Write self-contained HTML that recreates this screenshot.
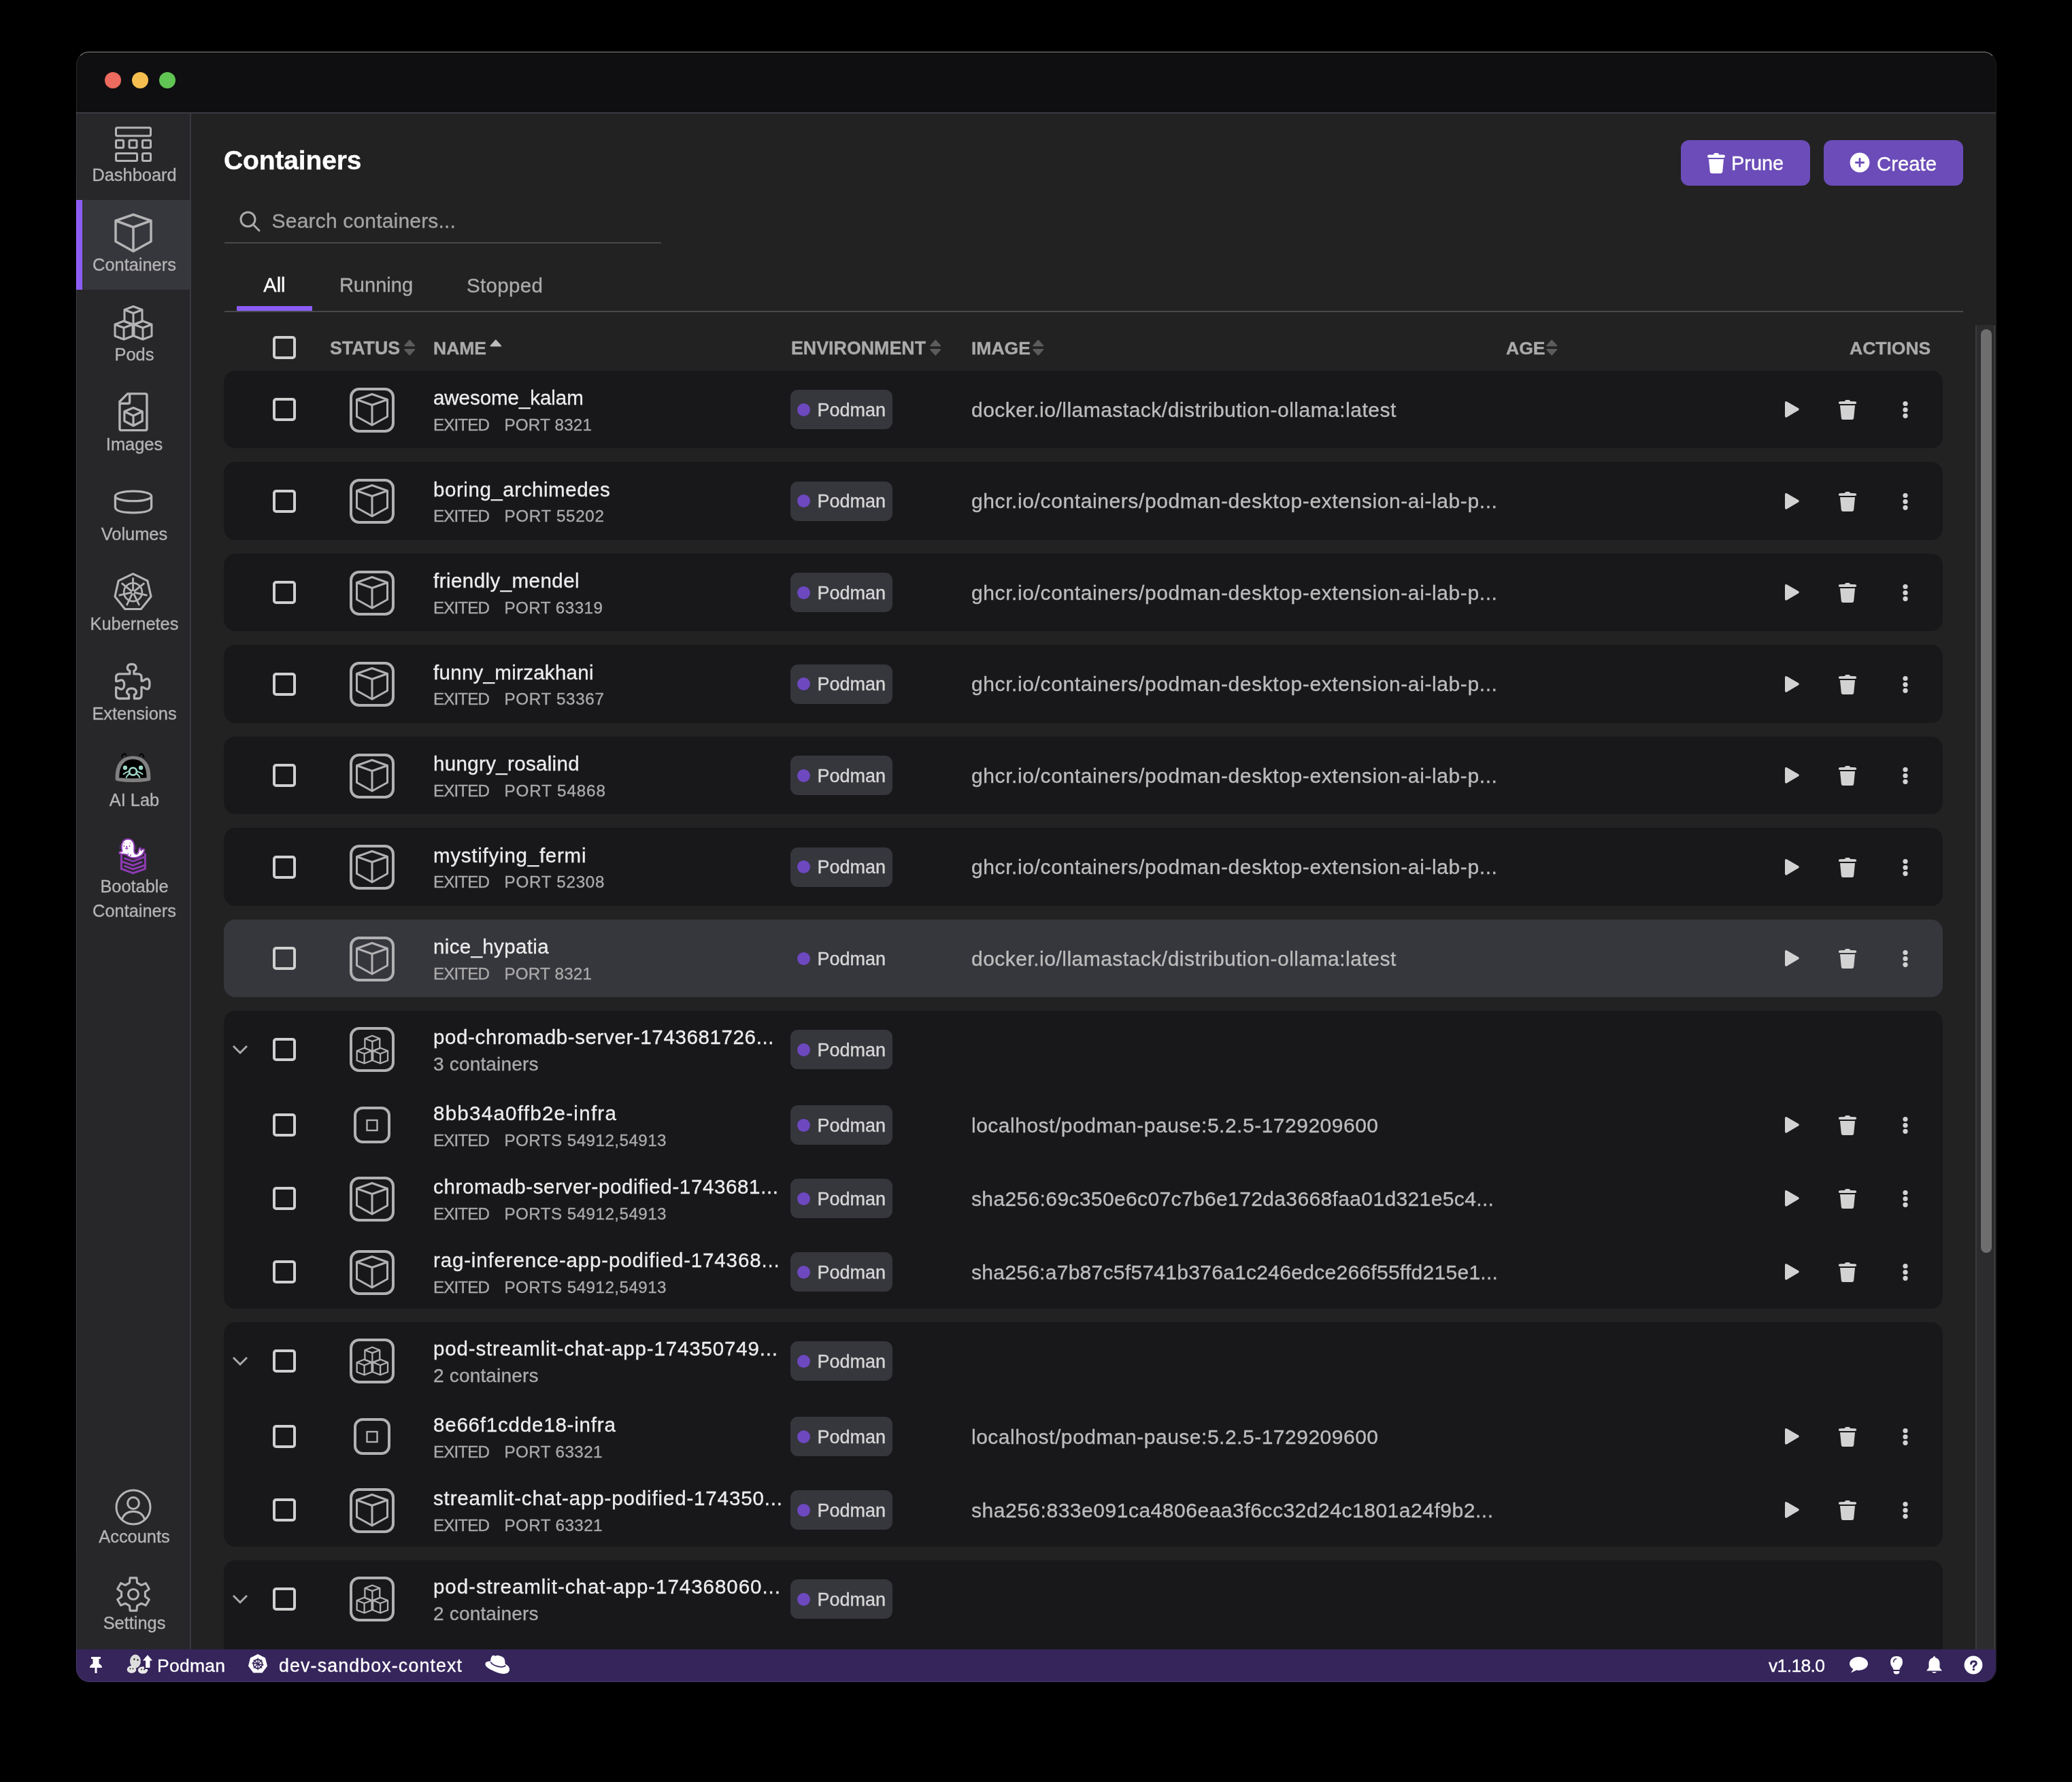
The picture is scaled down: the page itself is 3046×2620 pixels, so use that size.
<!DOCTYPE html><html><head><meta charset="utf-8"><style>
*{margin:0;padding:0;box-sizing:border-box}
html,body{width:3046px;height:2620px;background:#000;overflow:hidden}
body{position:relative;font-family:"Liberation Sans",sans-serif}
.t{position:absolute;line-height:1;white-space:nowrap;-webkit-font-smoothing:antialiased;-webkit-text-stroke:0.35px currentColor}
.a{position:absolute;display:block}
.win{position:absolute;left:112px;top:76px;width:2822px;height:2396px;border-radius:20px;overflow:hidden;background:#222222}
.cb{position:absolute;width:34px;height:34px;border:4px solid #cfcfcf;border-radius:5px}
.card{position:absolute;left:329px;width:2527px;border-radius:17px}
.badge{position:absolute;left:1162px;width:150px;height:58px;border-radius:11px}
.dot{position:absolute;left:10px;top:19.5px;width:19px;height:19px;border-radius:50%;background:#6d48bf}
</style></head><body><div id="root" style="position:absolute;left:0;top:0;width:3046px;height:2620px;will-change:transform">

<div class="win"></div>
<div class="a" style="left:112px;top:76px;width:2822px;height:90px;background:#0f0f11;border-radius:20px 20px 0 0"></div>
<div class="a" style="left:112px;top:165px;width:2822px;height:2px;background:#393940"></div>
<div class="a" style="left:154px;top:106px;width:24px;height:24px;border-radius:50%;background:#ec6a5e"></div>
<div class="a" style="left:194px;top:106px;width:24px;height:24px;border-radius:50%;background:#f4bf4f"></div>
<div class="a" style="left:234px;top:106px;width:24px;height:24px;border-radius:50%;background:#61c554"></div>
<div class="a" style="left:112px;top:167px;width:167px;height:2258px;background:#27272a"></div>
<div class="a" style="left:279px;top:167px;width:2px;height:2258px;background:#393940"></div>
<div class="a" style="left:112px;top:294px;width:167px;height:132px;background:#36363d"></div>
<div class="a" style="left:112px;top:294px;width:9px;height:132px;background:#8b5cf6"></div>
<svg class="a" style="left:166px;top:183px" width="60" height="60" viewBox="0 0 60 60" fill="none" stroke="#b4b4b5" stroke-width="3"><rect x="4.5" y="4.8" width="51" height="12" rx="2"/><rect x="4.5" y="23.3" width="11" height="11" rx="1.5"/><rect x="24" y="23.3" width="11" height="11" rx="1.5"/><rect x="43.5" y="23.3" width="12" height="11" rx="1.5"/><rect x="4.5" y="42.5" width="31" height="11" rx="1.5"/><rect x="43.5" y="42.5" width="12" height="11" rx="1.5"/></svg>
<div class="t" style="left:47.5px;width:300px;text-align:center;top:244.50px;font-size:25.4px;color:#b4b4b5">Dashboard</div>
<svg class="a" style="left:165px;top:312px" width="62" height="62" viewBox="0 0 62 62" fill="none" stroke="#b4b4b5" stroke-width="3.5" stroke-linejoin="round"><path d="M31 3.5 L57 12.5 L57 43 L31 57.5 L5 43 L5 12.5 Z"/><path d="M5 12.5 L31 22 L57 12.5 M31 22 L31 57.5"/></svg>
<div class="t" style="left:47.5px;width:300px;text-align:center;top:376.50px;font-size:25.4px;color:#b4b4b5">Containers</div>
<svg class="a" style="left:165px;top:447px" width="62" height="56" viewBox="0 0 62 56" fill="none" stroke="#b4b4b5" stroke-width="3" stroke-linejoin="round"><path d="M31 3.5 L44 8.5 L44 25.5 L31 30.5 L18 25.5 L18 8.5 Z"/><path d="M18 8.5 L31 13.5 L44 8.5 M31 13.5 L31 30.5"/><path d="M17 25 L30 30 L30 47 L17 52 L4 47 L4 30 Z"/><path d="M4 30 L17 35 L30 30 M17 35 L17 52"/><path d="M45 25 L58 30 L58 47 L45 52 L32 47 L32 30 Z"/><path d="M32 30 L45 35 L58 30 M45 35 L45 52"/></svg>
<div class="t" style="left:47.5px;width:300px;text-align:center;top:508.50px;font-size:25.4px;color:#b4b4b5">Pods</div>
<svg class="a" style="left:172px;top:575px" width="48" height="62" viewBox="0 0 48 62" fill="none" stroke="#b4b4b5" stroke-width="3.4" stroke-linejoin="round"><path d="M15.5 3.85 L41.5 3.85 Q43.95 3.85 43.95 6.3 L43.95 55.2 Q43.95 57.65 41.5 57.65 L6.4 57.65 Q3.95 57.65 3.95 55.2 L3.95 15.5 Z"/><path d="M18.6 3.85 L18.6 16 Q18.6 18.2 16.4 18.2 L3.95 18.2"/><path d="M24 24.6 L37.2 30 L37.2 44 L24 51 L10.9 44 L10.9 30 Z M10.9 30 L24 36.3 L37.2 30 M24 36.3 L24 51" stroke-width="3.2"/></svg>
<div class="t" style="left:47.5px;width:300px;text-align:center;top:640.50px;font-size:25.4px;color:#b4b4b5">Images</div>
<svg class="a" style="left:165px;top:718px" width="62" height="40" viewBox="0 0 62 40" fill="none" stroke="#b4b4b5" stroke-width="3.3"><ellipse cx="31" cy="11.4" rx="26.6" ry="7.3"/><path d="M4.4 11.4 L4.4 27.5 Q4.4 35.6 31 35.8 Q57.6 35.6 57.6 27.5 L57.6 11.4"/></svg>
<div class="t" style="left:47.5px;width:300px;text-align:center;top:772.50px;font-size:25.4px;color:#b4b4b5">Volumes</div>
<svg class="a" style="left:160px;top:835px" width="72" height="70" viewBox="0 0 72 70" fill="none" stroke="#b4b4b5" stroke-linejoin="round" stroke-linecap="round"><path d="M35.50 8.70 L56.80 18.96 L62.07 42.01 L47.32 60.50 L23.68 60.50 L8.93 42.01 L14.20 18.96 Z" stroke-width="3.1"/><circle cx="35.5" cy="35.7" r="13.4" stroke-width="2.6"/><path d="M35.5 35.7 L35.50 15.40 M35.5 35.7 L51.37 23.04 M35.5 35.7 L55.29 40.22 M35.5 35.7 L44.31 53.99 M35.5 35.7 L26.69 53.99 M35.5 35.7 L15.71 40.22 M35.5 35.7 L19.63 23.04" stroke-width="2.8"/><circle cx="35.5" cy="35.7" r="4.6" fill="{NAVC}" stroke="none"/><circle cx="35.5" cy="35.7" r="1.9" fill="#27272a" stroke="none"/></svg>
<div class="t" style="left:47.5px;width:300px;text-align:center;top:904.50px;font-size:25.4px;color:#b4b4b5">Kubernetes</div>
<svg class="a" style="left:163px;top:968px" width="66" height="66" viewBox="0 0 66 66" fill="none" stroke="#b4b4b5" stroke-width="3.3" stroke-linejoin="round"><path d="M12.6 22.8 L27.8 22.8 L27.8 18.6 C23 16.5 22.6 8.6 30.7 8.3 C38.6 8.6 38.4 16.5 33.9 18.6 L33.9 22.8 L40 22.8 Q45 22.8 45 27.8 L45 33.2 C48.5 33.8 50 29.8 53.3 30 C58.2 30.3 58.2 45 53.3 45.2 C50 45.2 48.6 42 45 42.2 L45 54 Q45 59 40 59 L34.4 59 L34.4 53.6 C39.5 51.5 37.8 44.2 30.4 44.2 C23 44.2 21.4 51.5 26.5 53.4 L26.5 59 L12.6 59 Q7.6 59 7.6 54 L7.6 42.8 C10.5 41.8 13 45.8 15.6 45.4 C21 44.8 21 32.2 15.6 31.8 C13 31.6 10.5 34.4 7.6 33.4 L7.6 27.8 Q7.6 22.8 12.6 22.8 Z"/></svg>
<div class="t" style="left:47.5px;width:300px;text-align:center;top:1036.50px;font-size:25.4px;color:#b4b4b5">Extensions</div>
<svg class="a" style="left:163px;top:1100px" width="66" height="56" viewBox="0 0 66 56"><path d="M16.2 13 Q17 8.6 19.1 8.6 Q21 8.4 22.3 10.2 M42.4 10.2 Q43.6 8.4 45.2 8.6 Q47.6 8.8 48.4 13" stroke="#000" stroke-width="2" fill="none" stroke-linecap="round"/><path d="M6.5 45 Q6 12 32.5 11.5 Q59 12 58.4 45 Q58.4 48 54 48.5 Q32.5 51.5 11 48.5 Q6.5 48 6.5 45 Z" fill="#808080"/><path d="M12.1 43.5 Q12.5 16.5 32.5 16.2 Q52.5 16.5 52.6 43.5 Q32.5 45.5 12.1 43.5 Z" fill="#000"/><circle cx="20.9" cy="28.8" r="3.2" fill="#9dd3c5"/><circle cx="44.1" cy="28.8" r="3.2" fill="#9dd3c5"/><circle cx="32.5" cy="34.2" r="5.4" fill="none" stroke="#9dd3c5" stroke-width="2.8"/><path d="M18.5 38.2 Q22 35 26.6 34.3 M22.6 43.3 Q24 39 27.8 37.5 M46.5 38.2 Q43 35 38.4 34.3 M42.4 43.3 Q41 39 37.2 37.5" stroke="#9dd3c5" stroke-width="1.9" fill="none" stroke-linecap="round"/></svg>
<div class="t" style="left:47.5px;width:300px;text-align:center;top:1163.50px;font-size:25.4px;color:#b4b4b5">AI Lab</div>
<svg class="a" style="left:166px;top:1226px" width="58" height="66" viewBox="0 0 58 66"><path d="M12.4 30.5 L12.4 51.5 L29.6 57.6 L47.4 51.5 L47.4 28.5" fill="none" stroke="#8e3bb3" stroke-width="3" stroke-linejoin="miter"/><path d="M16.3 35.6 L29.6 40.3 L47.4 33.6 M12.4 40.4 L29.6 46.4 L43 41.1 M16.3 47 L29.6 51.9 L47.4 46" fill="none" stroke="#8e3bb3" stroke-width="2.9"/><path d="M13.5 25.5 C11.5 17 13 8 21.9 7.6 C30.5 7.8 31.8 15 31.3 22.5 C31 26 31.5 29 33.8 29.6 C36.5 30 37.4 27.5 37.8 25 C38.2 22.5 39 20.2 40.2 20.5 C41.4 21 40.8 23.5 41.5 24.2 C42.5 23.5 44.3 21.4 45.8 22.5 C47.2 23.6 45 28 43 30.5 C40 33.5 34 35.8 29.6 35.2 C25 35 22 33 20.5 31 C17.5 29.5 13 30 10.5 29.2 C8.6 28.6 9 26.5 11 26.2 Z" fill="#fff" stroke="#8e3bb3" stroke-width="2"/><g fill="#8e3bb3"><circle cx="16.3" cy="18.1" r="1"/><circle cx="24.4" cy="18.1" r="1"/><circle cx="20.2" cy="19.2" r="1.2"/><circle cx="16.3" cy="13.4" r="0.7"/><circle cx="25.5" cy="13.4" r="0.7"/></g><path d="M18.3 21 Q20.2 23 22.2 21 M22.8 28.6 L21.2 31.6 M26.6 30.4 L25 33" fill="none" stroke="#8e3bb3" stroke-width="1.3"/><path d="M9 17.6 L11.8 17.6 M9 19.6 L11.8 19.6 M9 21.6 L11.8 21.6 M32.2 17.6 L34.6 17.6 M32.2 19.6 L34.6 19.6 M32.2 21.6 L34.6 21.6" stroke="#8e3bb3" stroke-width="0.7" opacity="0.7"/></svg>
<div class="t" style="left:47.5px;width:300px;text-align:center;top:1290.50px;font-size:25.4px;color:#b4b4b5">Bootable</div>
<div class="t" style="left:47.5px;width:300px;text-align:center;top:1326.50px;font-size:25.4px;color:#b4b4b5">Containers</div>
<svg class="a" style="left:165.5px;top:2185.5px" width="60" height="60" viewBox="0 0 60 60" fill="none" stroke="#b4b4b5" stroke-width="3"><circle cx="30" cy="30" r="25"/><circle cx="30" cy="24" r="8.4"/><path d="M13.5 47.5 Q17.5 36.2 30 36.2 Q42.5 36.2 46.5 47.5"/></svg>
<div class="t" style="left:47.5px;width:300px;text-align:center;top:2246.90px;font-size:25.4px;color:#b4b4b5">Accounts</div>
<svg class="a" style="left:165.5px;top:2313.5px" width="60" height="60" viewBox="0 0 60 60" fill="none" stroke="#b4b4b5" stroke-width="3.1" stroke-linejoin="round"><path d="M24.40 13.10 L25.11 5.89 L34.89 5.89 L35.60 13.10 L41.83 16.70 L48.44 13.71 L53.32 22.18 L47.43 26.40 L47.43 33.60 L53.32 37.82 L48.44 46.29 L41.83 43.30 L35.60 46.90 L34.89 54.11 L25.11 54.11 L24.40 46.90 L18.17 43.30 L11.56 46.29 L6.68 37.82 L12.57 33.60 L12.57 26.40 L6.68 22.18 L11.56 13.71 L18.17 16.70 Z"/><circle cx="30" cy="30" r="7.5"/></svg>
<div class="t" style="left:47.5px;width:300px;text-align:center;top:2374.10px;font-size:25.4px;color:#b4b4b5">Settings</div>
<div class="t" style="left:329.00px;top:216.29px;font-size:39px;color:#ffffff;font-weight:700;letter-spacing:-0.139px;">Containers</div>
<svg class="a" style="left:350px;top:308px" width="36" height="36" viewBox="0 0 36 36" fill="none" stroke="#aaaaaa" stroke-width="3" stroke-linecap="round"><circle cx="14.5" cy="14.5" r="10.5"/><path d="M22.5 22.5 L31 31"/></svg>
<div class="t" style="left:399.60px;top:310.00px;font-size:30px;color:#a3a3a3;letter-spacing:0.186px;">Search containers...</div>
<div class="a" style="left:330px;top:355.5px;width:642px;height:2px;background:#48484d"></div>
<div class="t" style="left:387.30px;top:405.05px;font-size:29px;color:#ffffff;">All</div>
<div class="t" style="left:498.90px;top:405.05px;font-size:29px;color:#aaaaaa;letter-spacing:0.017px;">Running</div>
<div class="t" style="left:686.00px;top:404.63px;font-size:29.5px;color:#aaaaaa;letter-spacing:0.354px;">Stopped</div>
<div class="a" style="left:330px;top:457px;width:2556px;height:2px;background:#48484d"></div>
<div class="a" style="left:348px;top:450px;width:111px;height:7px;background:#8b5cf6"></div>
<div class="a" style="left:2471px;top:206px;width:190px;height:67px;border-radius:12px;background:#6b4cb8"></div>
<div class="a" style="left:2681px;top:206px;width:205px;height:67px;border-radius:12px;background:#6b4cb8"></div>
<svg class="a" style="left:2508.5px;top:223.5px" width="28" height="32" viewBox="0 0 28 32" fill="#ffffff"><path d="M10 3.5 Q10 1 12.5 1 L15.5 1 Q18 1 18 3.5 L24.5 3.5 Q27 3.5 27 6 Q27 8 24.5 8 L3.5 8 Q1 8 1 6 Q1 3.5 3.5 3.5 Z"/><path d="M3 10 L25 10 L23.3 28 Q23 31 20 31 L8 31 Q5 31 4.7 28 Z"/></svg>
<div class="t" style="left:2545.00px;top:226.04px;font-size:28.9px;color:#ffffff;">Prune</div>
<svg class="a" style="left:2718.5px;top:224px" width="30" height="30" viewBox="0 0 30 30"><circle cx="15" cy="15" r="14.4" fill="#fff"/><path d="M15 9.3 L15 20.7 M9.3 15 L20.7 15" stroke="#6b4cb8" stroke-width="2.8" stroke-linecap="round"/></svg>
<div class="t" style="left:2759.00px;top:225.70px;font-size:29.3px;color:#ffffff;">Create</div>
<div class="cb" style="left:401px;top:494px;border-color:#cfcfcf"></div>
<div class="t" style="left:485.00px;top:498.81px;font-size:26.8px;color:#aaaaaa;font-weight:700;">STATUS</div>
<svg class="a" style="left:594px;top:498px" width="17" height="26" viewBox="0 0 17 26" fill="#5c5c5c" stroke="#5c5c5c" stroke-width="2" stroke-linejoin="round"><path d="M8.2 2.6 L15.2 10.3 L1.2 10.3 Z"/><path d="M8.2 23.6 L15.2 15.9 L1.2 15.9 Z"/></svg>
<div class="t" style="left:637.00px;top:499.07px;font-size:26.5px;color:#aaaaaa;font-weight:700;">NAME</div>
<svg class="a" style="left:720px;top:498px" width="18" height="13" viewBox="0 0 18 13" fill="#bdbdbd" stroke="#bdbdbd" stroke-width="2" stroke-linejoin="round"><path d="M8.8 2.4 L16.2 10.6 L1.4 10.6 Z"/></svg>
<div class="t" style="left:1163.00px;top:498.81px;font-size:26.8px;color:#aaaaaa;font-weight:700;">ENVIRONMENT</div>
<svg class="a" style="left:1367px;top:498px" width="17" height="26" viewBox="0 0 17 26" fill="#5c5c5c" stroke="#5c5c5c" stroke-width="2" stroke-linejoin="round"><path d="M8.2 2.6 L15.2 10.3 L1.2 10.3 Z"/><path d="M8.2 23.6 L15.2 15.9 L1.2 15.9 Z"/></svg>
<div class="t" style="left:1428.00px;top:499.07px;font-size:26.5px;color:#aaaaaa;font-weight:700;">IMAGE</div>
<svg class="a" style="left:1518px;top:498px" width="17" height="26" viewBox="0 0 17 26" fill="#5c5c5c" stroke="#5c5c5c" stroke-width="2" stroke-linejoin="round"><path d="M8.2 2.6 L15.2 10.3 L1.2 10.3 Z"/><path d="M8.2 23.6 L15.2 15.9 L1.2 15.9 Z"/></svg>
<div class="t" style="left:2214.00px;top:499.07px;font-size:26.5px;color:#aaaaaa;font-weight:700;">AGE</div>
<svg class="a" style="left:2273px;top:498px" width="17" height="26" viewBox="0 0 17 26" fill="#5c5c5c" stroke="#5c5c5c" stroke-width="2" stroke-linejoin="round"><path d="M8.2 2.6 L15.2 10.3 L1.2 10.3 Z"/><path d="M8.2 23.6 L15.2 15.9 L1.2 15.9 Z"/></svg>
<div class="t" style="left:2719.00px;top:499.07px;font-size:26.5px;color:#aaaaaa;font-weight:700;">ACTIONS</div>
<div class="card" style="top:544.5px;height:114.5px;background:#18181b"></div><div class="cb" style="left:401px;top:585.0px;border-color:#cfcfcf"></div><svg class="a" style="left:514px;top:569.5px" width="66" height="66" viewBox="0 0 66 66" fill="none" stroke="#b1b1b3" stroke-linejoin="round"><rect x="2" y="2" width="62" height="62" rx="12" stroke-width="4"/><g stroke-width="3"><path d="M33 9.5 L55.5 17.5 L55.5 42.5 L33 55 L10.5 42.5 L10.5 17.5 Z"/><path d="M10.5 17.5 L33 25.5 L55.5 17.5 M33 25.5 L33 55"/></g></svg><div class="t" style="left:637.00px;top:570.03px;font-size:29.5px;color:#ececec;letter-spacing:-0.048px;">awesome_kalam</div><div class="t" style="left:637.00px;top:612.51px;font-size:24.2px;color:#aaaaaa;letter-spacing:-0.875px;">EXITED</div><div class="t" style="left:741.50px;top:612.51px;font-size:24.2px;color:#aaaaaa;letter-spacing:0.203px;">PORT 8321</div><div class="badge" style="top:573.0px;background:#36363d"><span class="dot"></span></div><div class="t" style="left:1201.50px;top:589.74px;font-size:27px;color:#d6d6d6;">Podman</div><div class="t" style="left:1428.00px;top:587.61px;font-size:30px;color:#bcbcbc;letter-spacing:0.485px;">docker.io/llamastack/distribution-ollama:latest</div><svg class="a" style="left:2621px;top:588.0px" width="26" height="28" viewBox="0 0 26 28"><path d="M3 4.5 Q3 1 6 2.6 L22.5 12 Q25 13.7 22.5 15.6 L6 25.2 Q3 26.8 3 23.3 Z" fill="#d2d2d2"/></svg><svg class="a" style="left:2702px;top:587.0px" width="28" height="31" viewBox="0 0 28 31"><path d="M10 3 Q10 1 12.5 1 L15.5 1 Q18 1 18 3 L25 3.2 Q27.2 3.4 27.2 5.3 Q27.2 7 25 7 L3 7 Q0.8 7 0.8 5.3 Q0.8 3.4 3 3.2 Z" fill="#d2d2d2"/><path d="M3 9 L25 9 L23.2 27.5 Q23 30 20.5 30 L7.5 30 Q5 30 4.8 27.5 Z" fill="#d2d2d2"/></svg><svg class="a" style="left:2796px;top:588.0px" width="10" height="28" viewBox="0 0 10 28" fill="#d2d2d2"><circle cx="5" cy="5.5" r="3.6"/><circle cx="5" cy="14.5" r="3.6"/><circle cx="5" cy="23.3" r="3.6"/></svg>
<div class="card" style="top:679.0px;height:114.5px;background:#18181b"></div><div class="cb" style="left:401px;top:719.5px;border-color:#cfcfcf"></div><svg class="a" style="left:514px;top:704.0px" width="66" height="66" viewBox="0 0 66 66" fill="none" stroke="#b1b1b3" stroke-linejoin="round"><rect x="2" y="2" width="62" height="62" rx="12" stroke-width="4"/><g stroke-width="3"><path d="M33 9.5 L55.5 17.5 L55.5 42.5 L33 55 L10.5 42.5 L10.5 17.5 Z"/><path d="M10.5 17.5 L33 25.5 L55.5 17.5 M33 25.5 L33 55"/></g></svg><div class="t" style="left:637.00px;top:704.53px;font-size:29.5px;color:#ececec;letter-spacing:0.558px;">boring_archimedes</div><div class="t" style="left:637.00px;top:747.01px;font-size:24.2px;color:#aaaaaa;letter-spacing:-0.875px;">EXITED</div><div class="t" style="left:741.50px;top:747.01px;font-size:24.2px;color:#aaaaaa;letter-spacing:0.681px;">PORT 55202</div><div class="badge" style="top:707.5px;background:#36363d"><span class="dot"></span></div><div class="t" style="left:1201.50px;top:724.24px;font-size:27px;color:#d6d6d6;">Podman</div><div class="t" style="left:1428.00px;top:722.11px;font-size:30px;color:#bcbcbc;letter-spacing:0.602px;">ghcr.io/containers/podman-desktop-extension-ai-lab-p...</div><svg class="a" style="left:2621px;top:722.5px" width="26" height="28" viewBox="0 0 26 28"><path d="M3 4.5 Q3 1 6 2.6 L22.5 12 Q25 13.7 22.5 15.6 L6 25.2 Q3 26.8 3 23.3 Z" fill="#d2d2d2"/></svg><svg class="a" style="left:2702px;top:721.5px" width="28" height="31" viewBox="0 0 28 31"><path d="M10 3 Q10 1 12.5 1 L15.5 1 Q18 1 18 3 L25 3.2 Q27.2 3.4 27.2 5.3 Q27.2 7 25 7 L3 7 Q0.8 7 0.8 5.3 Q0.8 3.4 3 3.2 Z" fill="#d2d2d2"/><path d="M3 9 L25 9 L23.2 27.5 Q23 30 20.5 30 L7.5 30 Q5 30 4.8 27.5 Z" fill="#d2d2d2"/></svg><svg class="a" style="left:2796px;top:722.5px" width="10" height="28" viewBox="0 0 10 28" fill="#d2d2d2"><circle cx="5" cy="5.5" r="3.6"/><circle cx="5" cy="14.5" r="3.6"/><circle cx="5" cy="23.3" r="3.6"/></svg>
<div class="card" style="top:813.5px;height:114.5px;background:#18181b"></div><div class="cb" style="left:401px;top:854.0px;border-color:#cfcfcf"></div><svg class="a" style="left:514px;top:838.5px" width="66" height="66" viewBox="0 0 66 66" fill="none" stroke="#b1b1b3" stroke-linejoin="round"><rect x="2" y="2" width="62" height="62" rx="12" stroke-width="4"/><g stroke-width="3"><path d="M33 9.5 L55.5 17.5 L55.5 42.5 L33 55 L10.5 42.5 L10.5 17.5 Z"/><path d="M10.5 17.5 L33 25.5 L55.5 17.5 M33 25.5 L33 55"/></g></svg><div class="t" style="left:637.00px;top:839.03px;font-size:29.5px;color:#ececec;letter-spacing:0.454px;">friendly_mendel</div><div class="t" style="left:637.00px;top:881.51px;font-size:24.2px;color:#aaaaaa;letter-spacing:-0.875px;">EXITED</div><div class="t" style="left:741.50px;top:881.51px;font-size:24.2px;color:#aaaaaa;letter-spacing:0.458px;">PORT 63319</div><div class="badge" style="top:842.0px;background:#36363d"><span class="dot"></span></div><div class="t" style="left:1201.50px;top:858.74px;font-size:27px;color:#d6d6d6;">Podman</div><div class="t" style="left:1428.00px;top:856.61px;font-size:30px;color:#bcbcbc;letter-spacing:0.602px;">ghcr.io/containers/podman-desktop-extension-ai-lab-p...</div><svg class="a" style="left:2621px;top:857.0px" width="26" height="28" viewBox="0 0 26 28"><path d="M3 4.5 Q3 1 6 2.6 L22.5 12 Q25 13.7 22.5 15.6 L6 25.2 Q3 26.8 3 23.3 Z" fill="#d2d2d2"/></svg><svg class="a" style="left:2702px;top:856.0px" width="28" height="31" viewBox="0 0 28 31"><path d="M10 3 Q10 1 12.5 1 L15.5 1 Q18 1 18 3 L25 3.2 Q27.2 3.4 27.2 5.3 Q27.2 7 25 7 L3 7 Q0.8 7 0.8 5.3 Q0.8 3.4 3 3.2 Z" fill="#d2d2d2"/><path d="M3 9 L25 9 L23.2 27.5 Q23 30 20.5 30 L7.5 30 Q5 30 4.8 27.5 Z" fill="#d2d2d2"/></svg><svg class="a" style="left:2796px;top:857.0px" width="10" height="28" viewBox="0 0 10 28" fill="#d2d2d2"><circle cx="5" cy="5.5" r="3.6"/><circle cx="5" cy="14.5" r="3.6"/><circle cx="5" cy="23.3" r="3.6"/></svg>
<div class="card" style="top:948.0px;height:114.5px;background:#18181b"></div><div class="cb" style="left:401px;top:988.5px;border-color:#cfcfcf"></div><svg class="a" style="left:514px;top:973.0px" width="66" height="66" viewBox="0 0 66 66" fill="none" stroke="#b1b1b3" stroke-linejoin="round"><rect x="2" y="2" width="62" height="62" rx="12" stroke-width="4"/><g stroke-width="3"><path d="M33 9.5 L55.5 17.5 L55.5 42.5 L33 55 L10.5 42.5 L10.5 17.5 Z"/><path d="M10.5 17.5 L33 25.5 L55.5 17.5 M33 25.5 L33 55"/></g></svg><div class="t" style="left:637.00px;top:973.53px;font-size:29.5px;color:#ececec;letter-spacing:0.290px;">funny_mirzakhani</div><div class="t" style="left:637.00px;top:1016.01px;font-size:24.2px;color:#aaaaaa;letter-spacing:-0.875px;">EXITED</div><div class="t" style="left:741.50px;top:1016.01px;font-size:24.2px;color:#aaaaaa;letter-spacing:0.681px;">PORT 53367</div><div class="badge" style="top:976.5px;background:#36363d"><span class="dot"></span></div><div class="t" style="left:1201.50px;top:993.24px;font-size:27px;color:#d6d6d6;">Podman</div><div class="t" style="left:1428.00px;top:991.11px;font-size:30px;color:#bcbcbc;letter-spacing:0.602px;">ghcr.io/containers/podman-desktop-extension-ai-lab-p...</div><svg class="a" style="left:2621px;top:991.5px" width="26" height="28" viewBox="0 0 26 28"><path d="M3 4.5 Q3 1 6 2.6 L22.5 12 Q25 13.7 22.5 15.6 L6 25.2 Q3 26.8 3 23.3 Z" fill="#d2d2d2"/></svg><svg class="a" style="left:2702px;top:990.5px" width="28" height="31" viewBox="0 0 28 31"><path d="M10 3 Q10 1 12.5 1 L15.5 1 Q18 1 18 3 L25 3.2 Q27.2 3.4 27.2 5.3 Q27.2 7 25 7 L3 7 Q0.8 7 0.8 5.3 Q0.8 3.4 3 3.2 Z" fill="#d2d2d2"/><path d="M3 9 L25 9 L23.2 27.5 Q23 30 20.5 30 L7.5 30 Q5 30 4.8 27.5 Z" fill="#d2d2d2"/></svg><svg class="a" style="left:2796px;top:991.5px" width="10" height="28" viewBox="0 0 10 28" fill="#d2d2d2"><circle cx="5" cy="5.5" r="3.6"/><circle cx="5" cy="14.5" r="3.6"/><circle cx="5" cy="23.3" r="3.6"/></svg>
<div class="card" style="top:1082.5px;height:114.5px;background:#18181b"></div><div class="cb" style="left:401px;top:1123.0px;border-color:#cfcfcf"></div><svg class="a" style="left:514px;top:1107.5px" width="66" height="66" viewBox="0 0 66 66" fill="none" stroke="#b1b1b3" stroke-linejoin="round"><rect x="2" y="2" width="62" height="62" rx="12" stroke-width="4"/><g stroke-width="3"><path d="M33 9.5 L55.5 17.5 L55.5 42.5 L33 55 L10.5 42.5 L10.5 17.5 Z"/><path d="M10.5 17.5 L33 25.5 L55.5 17.5 M33 25.5 L33 55"/></g></svg><div class="t" style="left:637.00px;top:1108.03px;font-size:29.5px;color:#ececec;letter-spacing:0.338px;">hungry_rosalind</div><div class="t" style="left:637.00px;top:1150.51px;font-size:24.2px;color:#aaaaaa;letter-spacing:-0.875px;">EXITED</div><div class="t" style="left:741.50px;top:1150.51px;font-size:24.2px;color:#aaaaaa;letter-spacing:0.903px;">PORT 54868</div><div class="badge" style="top:1111.0px;background:#36363d"><span class="dot"></span></div><div class="t" style="left:1201.50px;top:1127.74px;font-size:27px;color:#d6d6d6;">Podman</div><div class="t" style="left:1428.00px;top:1125.61px;font-size:30px;color:#bcbcbc;letter-spacing:0.602px;">ghcr.io/containers/podman-desktop-extension-ai-lab-p...</div><svg class="a" style="left:2621px;top:1126.0px" width="26" height="28" viewBox="0 0 26 28"><path d="M3 4.5 Q3 1 6 2.6 L22.5 12 Q25 13.7 22.5 15.6 L6 25.2 Q3 26.8 3 23.3 Z" fill="#d2d2d2"/></svg><svg class="a" style="left:2702px;top:1125.0px" width="28" height="31" viewBox="0 0 28 31"><path d="M10 3 Q10 1 12.5 1 L15.5 1 Q18 1 18 3 L25 3.2 Q27.2 3.4 27.2 5.3 Q27.2 7 25 7 L3 7 Q0.8 7 0.8 5.3 Q0.8 3.4 3 3.2 Z" fill="#d2d2d2"/><path d="M3 9 L25 9 L23.2 27.5 Q23 30 20.5 30 L7.5 30 Q5 30 4.8 27.5 Z" fill="#d2d2d2"/></svg><svg class="a" style="left:2796px;top:1126.0px" width="10" height="28" viewBox="0 0 10 28" fill="#d2d2d2"><circle cx="5" cy="5.5" r="3.6"/><circle cx="5" cy="14.5" r="3.6"/><circle cx="5" cy="23.3" r="3.6"/></svg>
<div class="card" style="top:1217.0px;height:114.5px;background:#18181b"></div><div class="cb" style="left:401px;top:1257.5px;border-color:#cfcfcf"></div><svg class="a" style="left:514px;top:1242.0px" width="66" height="66" viewBox="0 0 66 66" fill="none" stroke="#b1b1b3" stroke-linejoin="round"><rect x="2" y="2" width="62" height="62" rx="12" stroke-width="4"/><g stroke-width="3"><path d="M33 9.5 L55.5 17.5 L55.5 42.5 L33 55 L10.5 42.5 L10.5 17.5 Z"/><path d="M10.5 17.5 L33 25.5 L55.5 17.5 M33 25.5 L33 55"/></g></svg><div class="t" style="left:637.00px;top:1242.53px;font-size:29.5px;color:#ececec;letter-spacing:0.758px;">mystifying_fermi</div><div class="t" style="left:637.00px;top:1285.01px;font-size:24.2px;color:#aaaaaa;letter-spacing:-0.875px;">EXITED</div><div class="t" style="left:741.50px;top:1285.01px;font-size:24.2px;color:#aaaaaa;letter-spacing:0.747px;">PORT 52308</div><div class="badge" style="top:1245.5px;background:#36363d"><span class="dot"></span></div><div class="t" style="left:1201.50px;top:1262.24px;font-size:27px;color:#d6d6d6;">Podman</div><div class="t" style="left:1428.00px;top:1260.11px;font-size:30px;color:#bcbcbc;letter-spacing:0.602px;">ghcr.io/containers/podman-desktop-extension-ai-lab-p...</div><svg class="a" style="left:2621px;top:1260.5px" width="26" height="28" viewBox="0 0 26 28"><path d="M3 4.5 Q3 1 6 2.6 L22.5 12 Q25 13.7 22.5 15.6 L6 25.2 Q3 26.8 3 23.3 Z" fill="#d2d2d2"/></svg><svg class="a" style="left:2702px;top:1259.5px" width="28" height="31" viewBox="0 0 28 31"><path d="M10 3 Q10 1 12.5 1 L15.5 1 Q18 1 18 3 L25 3.2 Q27.2 3.4 27.2 5.3 Q27.2 7 25 7 L3 7 Q0.8 7 0.8 5.3 Q0.8 3.4 3 3.2 Z" fill="#d2d2d2"/><path d="M3 9 L25 9 L23.2 27.5 Q23 30 20.5 30 L7.5 30 Q5 30 4.8 27.5 Z" fill="#d2d2d2"/></svg><svg class="a" style="left:2796px;top:1260.5px" width="10" height="28" viewBox="0 0 10 28" fill="#d2d2d2"><circle cx="5" cy="5.5" r="3.6"/><circle cx="5" cy="14.5" r="3.6"/><circle cx="5" cy="23.3" r="3.6"/></svg>
<div class="card" style="top:1351.5px;height:114.5px;background:#36363d"></div><div class="cb" style="left:401px;top:1392.0px;border-color:#cfcfcf"></div><svg class="a" style="left:514px;top:1376.5px" width="66" height="66" viewBox="0 0 66 66" fill="none" stroke="#b1b1b3" stroke-linejoin="round"><rect x="2" y="2" width="62" height="62" rx="12" stroke-width="4"/><g stroke-width="3"><path d="M33 9.5 L55.5 17.5 L55.5 42.5 L33 55 L10.5 42.5 L10.5 17.5 Z"/><path d="M10.5 17.5 L33 25.5 L55.5 17.5 M33 25.5 L33 55"/></g></svg><div class="t" style="left:637.00px;top:1377.03px;font-size:29.5px;color:#ececec;letter-spacing:0.359px;">nice_hypatia</div><div class="t" style="left:637.00px;top:1419.51px;font-size:24.2px;color:#aaaaaa;letter-spacing:-0.875px;">EXITED</div><div class="t" style="left:741.50px;top:1419.51px;font-size:24.2px;color:#aaaaaa;letter-spacing:0.203px;">PORT 8321</div><div class="badge" style="top:1380.0px;background:transparent"><span class="dot"></span></div><div class="t" style="left:1201.50px;top:1396.74px;font-size:27px;color:#d6d6d6;">Podman</div><div class="t" style="left:1428.00px;top:1394.61px;font-size:30px;color:#bcbcbc;letter-spacing:0.485px;">docker.io/llamastack/distribution-ollama:latest</div><svg class="a" style="left:2621px;top:1395.0px" width="26" height="28" viewBox="0 0 26 28"><path d="M3 4.5 Q3 1 6 2.6 L22.5 12 Q25 13.7 22.5 15.6 L6 25.2 Q3 26.8 3 23.3 Z" fill="#d2d2d2"/></svg><svg class="a" style="left:2702px;top:1394.0px" width="28" height="31" viewBox="0 0 28 31"><path d="M10 3 Q10 1 12.5 1 L15.5 1 Q18 1 18 3 L25 3.2 Q27.2 3.4 27.2 5.3 Q27.2 7 25 7 L3 7 Q0.8 7 0.8 5.3 Q0.8 3.4 3 3.2 Z" fill="#d2d2d2"/><path d="M3 9 L25 9 L23.2 27.5 Q23 30 20.5 30 L7.5 30 Q5 30 4.8 27.5 Z" fill="#d2d2d2"/></svg><svg class="a" style="left:2796px;top:1395.0px" width="10" height="28" viewBox="0 0 10 28" fill="#d2d2d2"><circle cx="5" cy="5.5" r="3.6"/><circle cx="5" cy="14.5" r="3.6"/><circle cx="5" cy="23.3" r="3.6"/></svg>
<div class="card" style="top:1486px;height:438px;background:#18181b"></div>
<svg class="a" style="left:342px;top:1536.5px" width="22" height="14" viewBox="0 0 22 14" fill="none" stroke="#aaaaaa" stroke-width="3" stroke-linecap="square"><path d="M2 2 L11 11 L20 2"/></svg><div class="cb" style="left:401px;top:1526px;border-color:#cfcfcf"></div><svg class="a" style="left:514px;top:1510px" width="66" height="66" viewBox="0 0 66 66" fill="none" stroke="#b1b1b3" stroke-linejoin="round"><rect x="2" y="2" width="62" height="62" rx="12" stroke-width="4"/><g transform="translate(7.3 9.8) scale(0.84)" stroke-width="2.7"><path d="M31 3.5 L44 8.5 L44 25.5 L31 30.5 L18 25.5 L18 8.5 Z"/><path d="M18 8.5 L31 13.5 L44 8.5 M31 13.5 L31 30.5"/><path d="M17 25 L30 30 L30 47 L17 52 L4 47 L4 30 Z"/><path d="M4 30 L17 35 L30 30 M17 35 L17 52"/><path d="M45 25 L58 30 L58 47 L45 52 L32 47 L32 30 Z"/><path d="M32 30 L45 35 L58 30 M45 35 L45 52"/></g></svg><div class="t" style="left:637.00px;top:1509.53px;font-size:29.5px;color:#ececec;letter-spacing:0.625px;">pod-chromadb-server-1743681726...</div><div class="t" style="left:637.00px;top:1551.30px;font-size:28px;color:#aaaaaa;letter-spacing:0.182px;">3 containers</div><div class="badge" style="top:1514px;background:#36363d"><span class="dot"></span></div><div class="t" style="left:1201.50px;top:1530.74px;font-size:27px;color:#d6d6d6;">Podman</div>
<div class="cb" style="left:401px;top:1637px;border-color:#cfcfcf"></div><svg class="a" style="left:520px;top:1627px" width="54" height="54" viewBox="0 0 54 54" fill="none" stroke="#b1b1b3"><rect x="2" y="2" width="50" height="50" rx="11" stroke-width="4"/><rect x="19.5" y="20" width="15" height="15" stroke-width="2.4"/></svg><div class="t" style="left:637.00px;top:1622.43px;font-size:29.5px;color:#ececec;letter-spacing:1.279px;">8bb34a0ffb2e-infra</div><div class="t" style="left:637.00px;top:1665.11px;font-size:24.2px;color:#aaaaaa;letter-spacing:-0.875px;">EXITED</div><div class="t" style="left:741.50px;top:1665.11px;font-size:24.2px;color:#aaaaaa;letter-spacing:0.450px;">PORTS 54912,54913</div><div class="badge" style="top:1625px;background:#36363d"><span class="dot"></span></div><div class="t" style="left:1201.50px;top:1641.74px;font-size:27px;color:#d6d6d6;">Podman</div><div class="t" style="left:1428.00px;top:1639.61px;font-size:30px;color:#bcbcbc;letter-spacing:0.507px;">localhost/podman-pause:5.2.5-1729209600</div><svg class="a" style="left:2621px;top:1640px" width="26" height="28" viewBox="0 0 26 28"><path d="M3 4.5 Q3 1 6 2.6 L22.5 12 Q25 13.7 22.5 15.6 L6 25.2 Q3 26.8 3 23.3 Z" fill="#d2d2d2"/></svg><svg class="a" style="left:2702px;top:1639px" width="28" height="31" viewBox="0 0 28 31"><path d="M10 3 Q10 1 12.5 1 L15.5 1 Q18 1 18 3 L25 3.2 Q27.2 3.4 27.2 5.3 Q27.2 7 25 7 L3 7 Q0.8 7 0.8 5.3 Q0.8 3.4 3 3.2 Z" fill="#d2d2d2"/><path d="M3 9 L25 9 L23.2 27.5 Q23 30 20.5 30 L7.5 30 Q5 30 4.8 27.5 Z" fill="#d2d2d2"/></svg><svg class="a" style="left:2796px;top:1640px" width="10" height="28" viewBox="0 0 10 28" fill="#d2d2d2"><circle cx="5" cy="5.5" r="3.6"/><circle cx="5" cy="14.5" r="3.6"/><circle cx="5" cy="23.3" r="3.6"/></svg>
<div class="cb" style="left:401px;top:1745px;border-color:#cfcfcf"></div><svg class="a" style="left:514px;top:1729.5px" width="66" height="66" viewBox="0 0 66 66" fill="none" stroke="#b1b1b3" stroke-linejoin="round"><rect x="2" y="2" width="62" height="62" rx="12" stroke-width="4"/><g stroke-width="3"><path d="M33 9.5 L55.5 17.5 L55.5 42.5 L33 55 L10.5 42.5 L10.5 17.5 Z"/><path d="M10.5 17.5 L33 25.5 L55.5 17.5 M33 25.5 L33 55"/></g></svg><div class="t" style="left:637.00px;top:1730.43px;font-size:29.5px;color:#ececec;letter-spacing:0.636px;">chromadb-server-podified-1743681...</div><div class="t" style="left:637.00px;top:1773.11px;font-size:24.2px;color:#aaaaaa;letter-spacing:-0.875px;">EXITED</div><div class="t" style="left:741.50px;top:1773.11px;font-size:24.2px;color:#aaaaaa;letter-spacing:0.450px;">PORTS 54912,54913</div><div class="badge" style="top:1733px;background:#36363d"><span class="dot"></span></div><div class="t" style="left:1201.50px;top:1749.74px;font-size:27px;color:#d6d6d6;">Podman</div><div class="t" style="left:1428.00px;top:1747.61px;font-size:30px;color:#bcbcbc;letter-spacing:0.367px;">sha256:69c350e6c07c7b6e172da3668faa01d321e5c4...</div><svg class="a" style="left:2621px;top:1748px" width="26" height="28" viewBox="0 0 26 28"><path d="M3 4.5 Q3 1 6 2.6 L22.5 12 Q25 13.7 22.5 15.6 L6 25.2 Q3 26.8 3 23.3 Z" fill="#d2d2d2"/></svg><svg class="a" style="left:2702px;top:1747px" width="28" height="31" viewBox="0 0 28 31"><path d="M10 3 Q10 1 12.5 1 L15.5 1 Q18 1 18 3 L25 3.2 Q27.2 3.4 27.2 5.3 Q27.2 7 25 7 L3 7 Q0.8 7 0.8 5.3 Q0.8 3.4 3 3.2 Z" fill="#d2d2d2"/><path d="M3 9 L25 9 L23.2 27.5 Q23 30 20.5 30 L7.5 30 Q5 30 4.8 27.5 Z" fill="#d2d2d2"/></svg><svg class="a" style="left:2796px;top:1748px" width="10" height="28" viewBox="0 0 10 28" fill="#d2d2d2"><circle cx="5" cy="5.5" r="3.6"/><circle cx="5" cy="14.5" r="3.6"/><circle cx="5" cy="23.3" r="3.6"/></svg>
<div class="cb" style="left:401px;top:1853px;border-color:#cfcfcf"></div><svg class="a" style="left:514px;top:1837.5px" width="66" height="66" viewBox="0 0 66 66" fill="none" stroke="#b1b1b3" stroke-linejoin="round"><rect x="2" y="2" width="62" height="62" rx="12" stroke-width="4"/><g stroke-width="3"><path d="M33 9.5 L55.5 17.5 L55.5 42.5 L33 55 L10.5 42.5 L10.5 17.5 Z"/><path d="M10.5 17.5 L33 25.5 L55.5 17.5 M33 25.5 L33 55"/></g></svg><div class="t" style="left:637.00px;top:1838.43px;font-size:29.5px;color:#ececec;letter-spacing:0.852px;">rag-inference-app-podified-174368...</div><div class="t" style="left:637.00px;top:1881.11px;font-size:24.2px;color:#aaaaaa;letter-spacing:-0.875px;">EXITED</div><div class="t" style="left:741.50px;top:1881.11px;font-size:24.2px;color:#aaaaaa;letter-spacing:0.450px;">PORTS 54912,54913</div><div class="badge" style="top:1841px;background:#36363d"><span class="dot"></span></div><div class="t" style="left:1201.50px;top:1857.74px;font-size:27px;color:#d6d6d6;">Podman</div><div class="t" style="left:1428.00px;top:1855.61px;font-size:30px;color:#bcbcbc;letter-spacing:0.281px;">sha256:a7b87c5f5741b376a1c246edce266f55ffd215e1...</div><svg class="a" style="left:2621px;top:1856px" width="26" height="28" viewBox="0 0 26 28"><path d="M3 4.5 Q3 1 6 2.6 L22.5 12 Q25 13.7 22.5 15.6 L6 25.2 Q3 26.8 3 23.3 Z" fill="#d2d2d2"/></svg><svg class="a" style="left:2702px;top:1855px" width="28" height="31" viewBox="0 0 28 31"><path d="M10 3 Q10 1 12.5 1 L15.5 1 Q18 1 18 3 L25 3.2 Q27.2 3.4 27.2 5.3 Q27.2 7 25 7 L3 7 Q0.8 7 0.8 5.3 Q0.8 3.4 3 3.2 Z" fill="#d2d2d2"/><path d="M3 9 L25 9 L23.2 27.5 Q23 30 20.5 30 L7.5 30 Q5 30 4.8 27.5 Z" fill="#d2d2d2"/></svg><svg class="a" style="left:2796px;top:1856px" width="10" height="28" viewBox="0 0 10 28" fill="#d2d2d2"><circle cx="5" cy="5.5" r="3.6"/><circle cx="5" cy="14.5" r="3.6"/><circle cx="5" cy="23.3" r="3.6"/></svg>
<div class="card" style="top:1944px;height:330px;background:#18181b"></div>
<svg class="a" style="left:342px;top:1994.5px" width="22" height="14" viewBox="0 0 22 14" fill="none" stroke="#aaaaaa" stroke-width="3" stroke-linecap="square"><path d="M2 2 L11 11 L20 2"/></svg><div class="cb" style="left:401px;top:1984px;border-color:#cfcfcf"></div><svg class="a" style="left:514px;top:1968px" width="66" height="66" viewBox="0 0 66 66" fill="none" stroke="#b1b1b3" stroke-linejoin="round"><rect x="2" y="2" width="62" height="62" rx="12" stroke-width="4"/><g transform="translate(7.3 9.8) scale(0.84)" stroke-width="2.7"><path d="M31 3.5 L44 8.5 L44 25.5 L31 30.5 L18 25.5 L18 8.5 Z"/><path d="M18 8.5 L31 13.5 L44 8.5 M31 13.5 L31 30.5"/><path d="M17 25 L30 30 L30 47 L17 52 L4 47 L4 30 Z"/><path d="M4 30 L17 35 L30 30 M17 35 L17 52"/><path d="M45 25 L58 30 L58 47 L45 52 L32 47 L32 30 Z"/><path d="M32 30 L45 35 L58 30 M45 35 L45 52"/></g></svg><div class="t" style="left:637.00px;top:1967.53px;font-size:29.5px;color:#ececec;letter-spacing:0.846px;">pod-streamlit-chat-app-174350749...</div><div class="t" style="left:637.00px;top:2009.30px;font-size:28px;color:#aaaaaa;letter-spacing:0.182px;">2 containers</div><div class="badge" style="top:1972px;background:#36363d"><span class="dot"></span></div><div class="t" style="left:1201.50px;top:1988.74px;font-size:27px;color:#d6d6d6;">Podman</div>
<div class="cb" style="left:401px;top:2095px;border-color:#cfcfcf"></div><svg class="a" style="left:520px;top:2085px" width="54" height="54" viewBox="0 0 54 54" fill="none" stroke="#b1b1b3"><rect x="2" y="2" width="50" height="50" rx="11" stroke-width="4"/><rect x="19.5" y="20" width="15" height="15" stroke-width="2.4"/></svg><div class="t" style="left:637.00px;top:2080.43px;font-size:29.5px;color:#ececec;letter-spacing:0.801px;">8e66f1cdde18-infra</div><div class="t" style="left:637.00px;top:2123.11px;font-size:24.2px;color:#aaaaaa;letter-spacing:-0.875px;">EXITED</div><div class="t" style="left:741.50px;top:2123.11px;font-size:24.2px;color:#aaaaaa;letter-spacing:0.414px;">PORT 63321</div><div class="badge" style="top:2083px;background:#36363d"><span class="dot"></span></div><div class="t" style="left:1201.50px;top:2099.74px;font-size:27px;color:#d6d6d6;">Podman</div><div class="t" style="left:1428.00px;top:2097.61px;font-size:30px;color:#bcbcbc;letter-spacing:0.507px;">localhost/podman-pause:5.2.5-1729209600</div><svg class="a" style="left:2621px;top:2098px" width="26" height="28" viewBox="0 0 26 28"><path d="M3 4.5 Q3 1 6 2.6 L22.5 12 Q25 13.7 22.5 15.6 L6 25.2 Q3 26.8 3 23.3 Z" fill="#d2d2d2"/></svg><svg class="a" style="left:2702px;top:2097px" width="28" height="31" viewBox="0 0 28 31"><path d="M10 3 Q10 1 12.5 1 L15.5 1 Q18 1 18 3 L25 3.2 Q27.2 3.4 27.2 5.3 Q27.2 7 25 7 L3 7 Q0.8 7 0.8 5.3 Q0.8 3.4 3 3.2 Z" fill="#d2d2d2"/><path d="M3 9 L25 9 L23.2 27.5 Q23 30 20.5 30 L7.5 30 Q5 30 4.8 27.5 Z" fill="#d2d2d2"/></svg><svg class="a" style="left:2796px;top:2098px" width="10" height="28" viewBox="0 0 10 28" fill="#d2d2d2"><circle cx="5" cy="5.5" r="3.6"/><circle cx="5" cy="14.5" r="3.6"/><circle cx="5" cy="23.3" r="3.6"/></svg>
<div class="cb" style="left:401px;top:2203px;border-color:#cfcfcf"></div><svg class="a" style="left:514px;top:2187.5px" width="66" height="66" viewBox="0 0 66 66" fill="none" stroke="#b1b1b3" stroke-linejoin="round"><rect x="2" y="2" width="62" height="62" rx="12" stroke-width="4"/><g stroke-width="3"><path d="M33 9.5 L55.5 17.5 L55.5 42.5 L33 55 L10.5 42.5 L10.5 17.5 Z"/><path d="M10.5 17.5 L33 25.5 L55.5 17.5 M33 25.5 L33 55"/></g></svg><div class="t" style="left:637.00px;top:2188.43px;font-size:29.5px;color:#ececec;letter-spacing:0.858px;">streamlit-chat-app-podified-174350...</div><div class="t" style="left:637.00px;top:2231.11px;font-size:24.2px;color:#aaaaaa;letter-spacing:-0.875px;">EXITED</div><div class="t" style="left:741.50px;top:2231.11px;font-size:24.2px;color:#aaaaaa;letter-spacing:0.414px;">PORT 63321</div><div class="badge" style="top:2191px;background:#36363d"><span class="dot"></span></div><div class="t" style="left:1201.50px;top:2207.74px;font-size:27px;color:#d6d6d6;">Podman</div><div class="t" style="left:1428.00px;top:2205.61px;font-size:30px;color:#bcbcbc;letter-spacing:0.524px;">sha256:833e091ca4806eaa3f6cc32d24c1801a24f9b2...</div><svg class="a" style="left:2621px;top:2206px" width="26" height="28" viewBox="0 0 26 28"><path d="M3 4.5 Q3 1 6 2.6 L22.5 12 Q25 13.7 22.5 15.6 L6 25.2 Q3 26.8 3 23.3 Z" fill="#d2d2d2"/></svg><svg class="a" style="left:2702px;top:2205px" width="28" height="31" viewBox="0 0 28 31"><path d="M10 3 Q10 1 12.5 1 L15.5 1 Q18 1 18 3 L25 3.2 Q27.2 3.4 27.2 5.3 Q27.2 7 25 7 L3 7 Q0.8 7 0.8 5.3 Q0.8 3.4 3 3.2 Z" fill="#d2d2d2"/><path d="M3 9 L25 9 L23.2 27.5 Q23 30 20.5 30 L7.5 30 Q5 30 4.8 27.5 Z" fill="#d2d2d2"/></svg><svg class="a" style="left:2796px;top:2206px" width="10" height="28" viewBox="0 0 10 28" fill="#d2d2d2"><circle cx="5" cy="5.5" r="3.6"/><circle cx="5" cy="14.5" r="3.6"/><circle cx="5" cy="23.3" r="3.6"/></svg>
<div class="card" style="top:2294px;height:131px;background:#18181b;border-radius:17px 17px 0 0"></div>
<svg class="a" style="left:342px;top:2344.5px" width="22" height="14" viewBox="0 0 22 14" fill="none" stroke="#aaaaaa" stroke-width="3" stroke-linecap="square"><path d="M2 2 L11 11 L20 2"/></svg><div class="cb" style="left:401px;top:2334px;border-color:#cfcfcf"></div><svg class="a" style="left:514px;top:2318px" width="66" height="66" viewBox="0 0 66 66" fill="none" stroke="#b1b1b3" stroke-linejoin="round"><rect x="2" y="2" width="62" height="62" rx="12" stroke-width="4"/><g transform="translate(7.3 9.8) scale(0.84)" stroke-width="2.7"><path d="M31 3.5 L44 8.5 L44 25.5 L31 30.5 L18 25.5 L18 8.5 Z"/><path d="M18 8.5 L31 13.5 L44 8.5 M31 13.5 L31 30.5"/><path d="M17 25 L30 30 L30 47 L17 52 L4 47 L4 30 Z"/><path d="M4 30 L17 35 L30 30 M17 35 L17 52"/><path d="M45 25 L58 30 L58 47 L45 52 L32 47 L32 30 Z"/><path d="M32 30 L45 35 L58 30 M45 35 L45 52"/></g></svg><div class="t" style="left:637.00px;top:2317.53px;font-size:29.5px;color:#ececec;letter-spacing:0.963px;">pod-streamlit-chat-app-174368060...</div><div class="t" style="left:637.00px;top:2359.30px;font-size:28px;color:#aaaaaa;letter-spacing:0.182px;">2 containers</div><div class="badge" style="top:2322px;background:#36363d"><span class="dot"></span></div><div class="t" style="left:1201.50px;top:2338.74px;font-size:27px;color:#d6d6d6;">Podman</div>
<div class="a" style="left:2904px;top:478px;width:2px;height:1947px;background:#3a3a3d"></div>
<div class="a" style="left:2906px;top:478px;width:26px;height:1947px;background:#2c2c2f"></div>
<div class="a" style="left:2912px;top:484px;width:16px;height:1358px;border-radius:8px;background:#6e6e6e"></div>
<div class="a" style="left:2931.5px;top:478px;width:1.5px;height:1947px;background:#4a4a4d"></div>
<div class="a" style="left:112px;top:2425px;width:2822px;height:48px;background:#35255b;border-radius:0 0 20px 20px"></div>
<svg class="a" style="left:130px;top:2435px" width="22" height="26" viewBox="0 0 22 26" fill="#fff"><path d="M4 1 L18 1 L18 4 L15.5 4 L15.5 11 Q20 13 20 17 L12.5 17 L12.5 25 L9.5 25 L9.5 17 L2 17 Q2 13 6.5 11 L6.5 4 L4 4 Z"/></svg>
<svg class="a" style="left:180px;top:2428px" width="50" height="40" viewBox="0 0 50 40"><ellipse cx="19" cy="14.5" rx="8" ry="10" fill="#dcdcdc"/><circle cx="17.3" cy="11.5" r="1.3" fill="#222"/><circle cx="22.5" cy="12.5" r="1.2" fill="#222"/><ellipse cx="13.5" cy="26.5" rx="6.8" ry="5.4" fill="#e4e4e4"/><circle cx="11.5" cy="25.5" r="1" fill="#222"/><circle cx="15.5" cy="25.5" r="1" fill="#222"/><ellipse cx="30" cy="27.5" rx="7.2" ry="5.2" fill="#e8e8e8"/><circle cx="28" cy="26.5" r="1" fill="#222"/><circle cx="32" cy="26.5" r="1" fill="#222"/><path d="M37 3.5 L46.5 14.5 L41.5 14.5 L41.5 25 L33 25 L33 14.5 L27.5 14.5 Z" fill="#fff" stroke="#35255b" stroke-width="2.2" stroke-linejoin="round"/></svg>
<div class="t" style="left:231.00px;top:2435.57px;font-size:26.5px;color:#ffffff;letter-spacing:0.250px;">Podman</div>
<svg class="a" style="left:364px;top:2431px" width="30" height="30" viewBox="0 0 30 30"><path d="M15 1 L26 6.5 L29 18.5 L21.5 28.5 L8.5 28.5 L1 18.5 L4 6.5 Z" fill="#fff"/><circle cx="15" cy="15.5" r="6.5" fill="none" stroke="#35255b" stroke-width="1.8"/><path d="M15 6.5 L15 24.5 M6.5 14 L23.5 17 M8.8 9.5 L21.2 21.5 M21.2 9.5 L8.8 21.5" stroke="#35255b" stroke-width="1.3"/></svg>
<div class="t" style="left:410.00px;top:2436.31px;font-size:26.8px;color:#ffffff;letter-spacing:1.125px;">dev-sandbox-context</div>
<svg class="a" style="left:690px;top:2425px" width="80" height="47" viewBox="0 0 80 47"><path d="M23.4 21.8 C23.2 18 28 17.4 31.5 17.6 L53.5 22 C57 23.5 59.2 26.5 59 30 C58.8 34 55 35.9 50.5 35.9 C44 35.8 35 32 29 28.5 C25.5 26.4 23.5 24 23.4 21.8 Z" fill="#fff"/><path d="M31 17.2 C31.5 12 33 8.8 35.5 8.8 C37 8.8 37.5 9.7 38.5 9.7 C39.8 9.2 41 8.7 42.5 8.9 C48 9.8 51 11.8 51.8 14.8 C52.5 18 52.6 20.5 52.8 22.3 C51.5 24 49 24.5 46.5 24.5 C40 24.3 33 21 31 17.2 Z" fill="#fff"/><path d="M31.2 18.6 C33.2 22.4 40 25.7 46.5 25.9 C49.5 25.9 52 25.3 53.2 23.6" fill="none" stroke="#35255b" stroke-width="1.7"/></svg>
<div class="t" style="left:2600.00px;top:2435.57px;font-size:26.5px;color:#ffffff;letter-spacing:-0.646px;">v1.18.0</div>
<svg class="a" style="left:2717px;top:2435px" width="30" height="26" viewBox="0 0 30 26" fill="#fff"><ellipse cx="15.5" cy="11" rx="13.5" ry="10"/><path d="M4 24.5 L8.5 17 L13 20 Z"/></svg>
<svg class="a" style="left:2778px;top:2434px" width="20" height="28" viewBox="0 0 20 28" fill="#fff"><path d="M10 1 Q19 1 19 10 Q19 14 16 17.5 Q14.5 19.5 14.5 21 L5.5 21 Q5.5 19.5 4 17.5 Q1 14 1 10 Q1 1 10 1 Z"/><path d="M5.5 23 L14.5 23 Q14.5 27.5 10 27.5 Q5.5 27.5 5.5 23 Z"/><path d="M5.6 9.5 Q6 5.6 9.6 4.8" stroke="#35255b" stroke-width="1.5" fill="none" stroke-linecap="round"/></svg>
<svg class="a" style="left:2831px;top:2434px" width="25" height="28" viewBox="0 0 25 28" fill="#fff"><path d="M12.5 1 Q14 1 14 3 Q20.5 4.5 20.5 12 L20.5 18 L24 22.5 L1 22.5 L4.5 18 L4.5 12 Q4.5 4.5 11 3 Q11 1 12.5 1 Z"/><path d="M9 24 Q12.5 28 16 24 Z"/></svg>
<svg class="a" style="left:2887px;top:2434px" width="28" height="28" viewBox="0 0 28 28"><circle cx="14" cy="14" r="13.4" fill="#fff"/><path d="M10.6 12.2 Q10.6 8.6 14.5 8.6 Q18.3 8.6 18.3 11.6 Q18.3 13.5 16 14.5 Q14.4 15.2 14.4 17" stroke="#35255b" stroke-width="2.9" fill="none" stroke-linecap="round"/><circle cx="14.4" cy="20.6" r="1.7" fill="#35255b"/></svg>
<div class="a" style="left:111.5px;top:75.5px;width:2823px;height:2397.5px;border-radius:19px;border:1.5px solid rgba(255,255,255,0.11);border-top-color:#8a8a8a;pointer-events:none"></div>
</div></body></html>
